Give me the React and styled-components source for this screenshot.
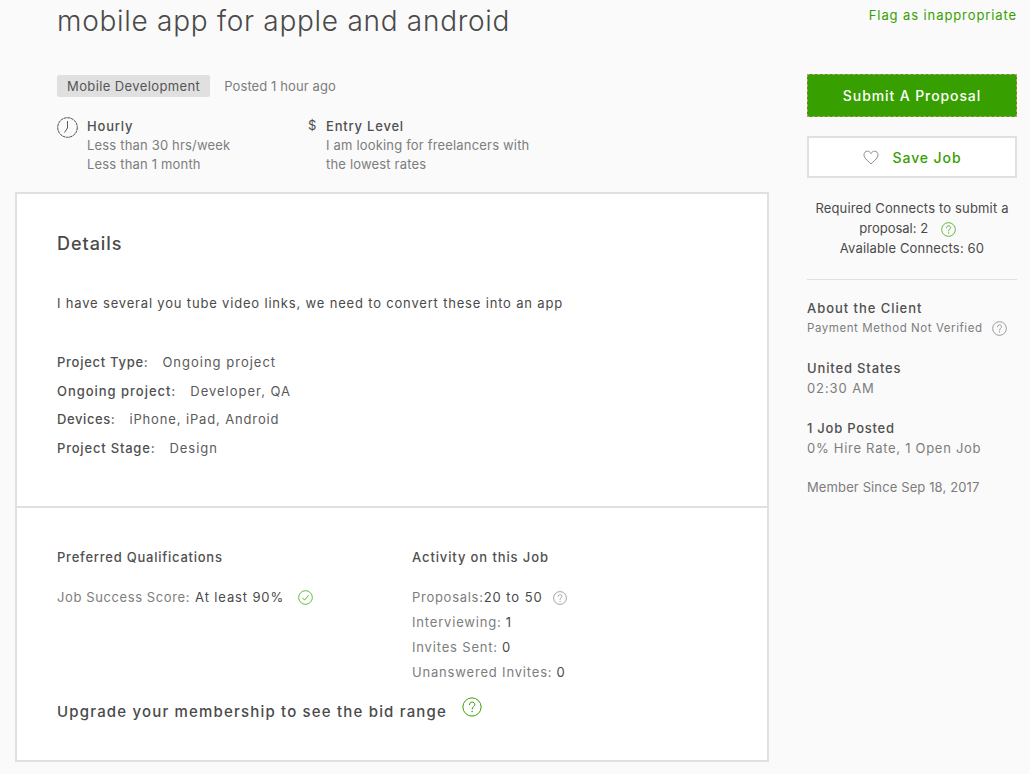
import React from "react";
import styled, { createGlobalStyle } from "styled-components";

const Global = createGlobalStyle`
  html, body { margin: 0; padding: 0; background: #fafafa; height: 774px; overflow: hidden; }
  body { font-family: "Inter", "Liberation Sans", sans-serif; color: #4a4a4a; }
`;
const Page = styled.div`
  width: 1030px; height: 774px; display: flex; box-sizing: border-box; padding-left: 15px; overflow: hidden;
`;
const Main = styled.main`width: 754px; flex: none; display: flex; flex-direction: column;`;
const Side = styled.aside`width: 210px; margin-left: 38px; flex: none; display: flex; flex-direction: column; font-size: 13px;`;
const Header = styled.header`height: 192px; padding-left: 42px; box-sizing: border-box; display: flex; flex-direction: column;`;
const Title = styled.h1`
  margin: 0; height: 75px; padding-top: 3px; box-sizing: border-box;
  font-size: 28px; font-weight: 300; line-height: 36px; color: #4a4a4a; letter-spacing: 0.72px; white-space: nowrap;
`;
const MetaRow = styled.div`display: flex; align-items: center; gap: 14px; height: 22px;`;
const Tag = styled.span`
  background: #e0e0e0; border-radius: 2px; height: 22px; line-height: 22px; padding: 0 10px;
  font-size: 13px; color: #555; letter-spacing: 0.39px; white-space: nowrap;
`;
const Muted = styled.span`font-size: 13px; color: #7d7d7d; letter-spacing: 0.1px;`;
const Facts = styled.div`display: flex; margin-top: 20px;`;
const Fact = styled.div`display: flex; width: ${p => p.$w}px; flex: none;`;
const FactIcon = styled.div`width: ${p => p.$w}px; flex: none; font-size: 13px; color: #4a4a4a;`;
const FactText = styled.div`display: flex; flex-direction: column; line-height: 19px; font-size: 13px; color: #7d7d7d;`;
const FactTitle = styled.div`color: #505050; font-weight: 500; letter-spacing: 0.8px;`;
const FactLine = styled.div`letter-spacing: 0.18px; white-space: nowrap;`;
const Card = styled.section`
  height: 570px; box-sizing: border-box; border: 2px solid #e0e0e0; background: #fff;
  display: flex; flex-direction: column;
`;
const Top = styled.div`height: 314px; box-sizing: border-box; padding: 38px 40px 0; border-bottom: 2px solid #e0e0e0; flex: none;`;
const Bottom = styled.div`flex: 1; padding: 40px 40px 0; display: flex; flex-direction: column;`;
const H2 = styled.h2`margin: 0; font-size: 18px; line-height: 24px; font-weight: 500; color: #4a4a4a; letter-spacing: 0.95px;`;
const Para = styled.p`margin: 37px 0 40px; font-size: 13px; line-height: 20px; color: #4a4a4a; letter-spacing: 0.82px; white-space: nowrap;`;
const Spec = styled.div`font-size: 13px; line-height: 19px; margin-bottom: 9.6px; color: #5a5a5a; letter-spacing: ${p => p.$ls || "1px"}; display: flex; gap: 14px; white-space: nowrap;`;
const SpecLabel = styled.span`color: #505050; font-weight: 500; letter-spacing: ${p => p.$ls || "0.72px"};`;
const Cols = styled.div`display: flex;`;
const Col = styled.div`width: ${p => p.$w}px; flex: none;`;
const H3 = styled.h3`margin: 0 0 18px; font-size: 13px; line-height: 18px; font-weight: 500; color: #505050; letter-spacing: ${p => p.$ls};`;
const Stat = styled.div`display: flex; align-items: center; height: 25px; font-size: 13px; color: #7d7d7d; letter-spacing: ${p => p.$ls || "0.82px"}; white-space: nowrap;`;
const Val = styled.span`color: #4a4a4a; letter-spacing: ${p => p.$ls || "0.95px"}; margin-left: ${p => p.$ml || 0}px;`;
const Upgrade = styled.div`display: flex; align-items: center; margin-top: 12px; font-size: 15px; font-weight: 500; color: #4a4a4a; letter-spacing: 1.18px; height: 30px; white-space: nowrap;`;
const Flag = styled.a`align-self: flex-end; margin-top: 7px; height: 17px; line-height: 17px; font-size: 13px; color: #37a000; letter-spacing: 0.9px; margin-bottom: 50px; white-space: nowrap;`;
const Primary = styled.button`
  height: 43px; border: 1px dashed #b0a060; background: #37a000; color: #fff; font: 500 14px "Inter", sans-serif;
  letter-spacing: 0.9px; padding: 0; box-sizing: border-box;
`;
const Secondary = styled.button`
  height: 42px; margin-top: 19px; border: 2px solid #e0e0e0; background: #fff; color: #37a000; font: 500 14px "Inter", sans-serif;
  letter-spacing: 0.9px; box-sizing: border-box; display: flex; align-items: center; justify-content: center; gap: 14px; padding: 0;
`;
const Connects = styled.div`margin-top: 20px; text-align: center; line-height: 20px; font-size: 13px; color: #4a4a4a; letter-spacing: 0.16px; padding-bottom: 21px; border-bottom: 1px solid #e0e0e0; white-space: nowrap;`;
const HelpLine = styled.span`display: inline-block; margin-right: 9px; letter-spacing: 0;`;
const Block = styled.div`margin-top: ${p => p.$mt}px; line-height: 20px;`;
const BlockTitle = styled.div`font-weight: 500; color: #505050; letter-spacing: ${p => p.$ls}; white-space: nowrap;`;
const BlockLine = styled.div`color: #7d7d7d; font-size: ${p => p.$fs || 13}px; letter-spacing: ${p => p.$ls}; white-space: nowrap; display: flex; align-items: center;`;

const Help = ({ size = 15, color = "#7d7d7d", ml = 0, mt = 0 }) => (
  <svg width={size} height={size} viewBox="0 0 16 16" fill="none" style={{ marginLeft: ml, marginTop: mt, flex: "none", verticalAlign: "middle" }}>
    <circle cx="8" cy="8" r="7.3" stroke={color} strokeWidth="0.8" />
    <path d="M5.9 6.2C5.9 4.9 6.9 4.1 8.1 4.1c1.2 0 2.1.8 2.1 1.9 0 1.6-2.1 1.8-2.1 3.6" stroke={color} strokeWidth="0.8" strokeLinecap="round" />
    <circle cx="8.1" cy="11.6" r="0.6" fill={color} />
  </svg>
);
const Clock = () => (
  <svg width="21" height="21" viewBox="0 0 21 21" fill="none">
    <circle cx="10.5" cy="10.5" r="9.8" stroke="#4a4a4a" strokeWidth="1" strokeDasharray="3 0.5" />
    <path d="M10.5 4v7L7.5 15.5" stroke="#4a4a4a" strokeWidth="0.9" />
  </svg>
);
const Check = () => (
  <svg width="15" height="15" viewBox="0 0 16 16" fill="none" style={{ marginLeft: 14, marginTop: 2, flex: "none" }}>
    <circle cx="8" cy="8" r="7.3" stroke="#37a000" strokeWidth="0.8" />
    <path d="M4.6 8.2l2.4 2.6 4.4-5.4" stroke="#37a000" strokeWidth="0.8" />
  </svg>
);
const Heart = () => (
  <svg width="16" height="15" viewBox="0 0 16 15" fill="none">
    <path d="M8 13.8C3.5 10 1 7.6 1 4.8 1 2.7 2.6 1.2 4.4 1.2c1.5 0 2.8.9 3.6 2.4.8-1.5 2.1-2.4 3.6-2.4C13.4 1.2 15 2.7 15 4.8c0 2.8-2.5 5.2-7 9Z" stroke="#7d7d7d" strokeWidth="0.9" />
  </svg>
);

export default function App() {
  return (
    <Page>
      <Global />
      <Main>
        <Header>
          <Title>mobile app for apple and android</Title>
          <MetaRow>
            <Tag>Mobile Development</Tag>
            <Muted>Posted 1 hour ago</Muted>
          </MetaRow>
          <Facts>
            <Fact $w={251}>
              <FactIcon $w={30}><Clock /></FactIcon>
              <FactText>
                <FactTitle>Hourly</FactTitle>
                <FactLine>Less than 30 hrs/week</FactLine>
                <FactLine>Less than 1 month</FactLine>
              </FactText>
            </Fact>
            <Fact $w={260}>
              <FactIcon $w={18}>$</FactIcon>
              <FactText>
                <FactTitle>Entry Level</FactTitle>
                <FactLine>I am looking for freelancers with</FactLine>
                <FactLine>the lowest rates</FactLine>
              </FactText>
            </Fact>
          </Facts>
        </Header>
        <Card>
          <Top>
            <H2>Details</H2>
            <Para>I have several you tube video links, we need to convert these into an app</Para>
            <Spec><SpecLabel>Project Type:</SpecLabel><span>Ongoing project</span></Spec>
            <Spec><SpecLabel $ls="0.97px">Ongoing project:</SpecLabel><span>Developer, QA</span></Spec>
            <Spec $ls="0.86px"><SpecLabel $ls="0.6px">Devices:</SpecLabel><span>iPhone, iPad, Android</span></Spec>
            <Spec><SpecLabel $ls="0.8px">Project Stage:</SpecLabel><span>Design</span></Spec>
          </Top>
          <Bottom>
            <Cols>
              <Col $w={355}>
                <H3 $ls="0.76px">Preferred Qualifications</H3>
                <Stat $ls="0.6px">Job Success Score:<Val $ml={5} $ls="0.87px">At least 90%</Val><Check /></Stat>
              </Col>
              <Col $w={300}>
                <H3 $ls="0.88px">Activity on this Job</H3>
                <Stat $ls="0.72px">Proposals:<Val>20 to 50</Val><Help size={14} ml={10} mt={2} /></Stat>
                <Stat>Interviewing:<Val $ml={4}>1</Val></Stat>
                <Stat>Invites Sent:<Val $ml={4}>0</Val></Stat>
                <Stat>Unanswered Invites:<Val $ml={4}>0</Val></Stat>
              </Col>
            </Cols>
            <Upgrade>Upgrade your membership to see the bid range<Help size={20} color="#37a000" ml={15} mt={-8} /></Upgrade>
          </Bottom>
        </Card>
      </Main>
      <Side>
        <Flag>Flag as inappropriate</Flag>
        <Primary>Submit A Proposal</Primary>
        <Secondary><Heart />Save Job</Secondary>
        <Connects>
          Required Connects to submit a<br />
          <HelpLine>proposal: 2 <Help size={15} color="#37a000" ml={9} /></HelpLine><br />
          Available Connects: 60
        </Connects>
        <Block $mt={18}>
          <BlockTitle $ls="0.95px">About the Client</BlockTitle>
          <BlockLine $fs={11.5} $ls="0.57px">Payment Method Not Verified<Help size={15} ml={9} /></BlockLine>
        </Block>
        <Block $mt={20}>
          <BlockTitle $ls="0.85px">United States</BlockTitle>
          <BlockLine $ls="0.9px">02:30 AM</BlockLine>
        </Block>
        <Block $mt={20}>
          <BlockTitle $ls="0.75px">1 Job Posted</BlockTitle>
          <BlockLine $ls="0.72px">0% Hire Rate, 1 Open Job</BlockLine>
        </Block>
        <Block $mt={19}>
          <BlockLine $ls="0.12px">Member Since Sep 18, 2017</BlockLine>
        </Block>
      </Side>
    </Page>
  );
}
